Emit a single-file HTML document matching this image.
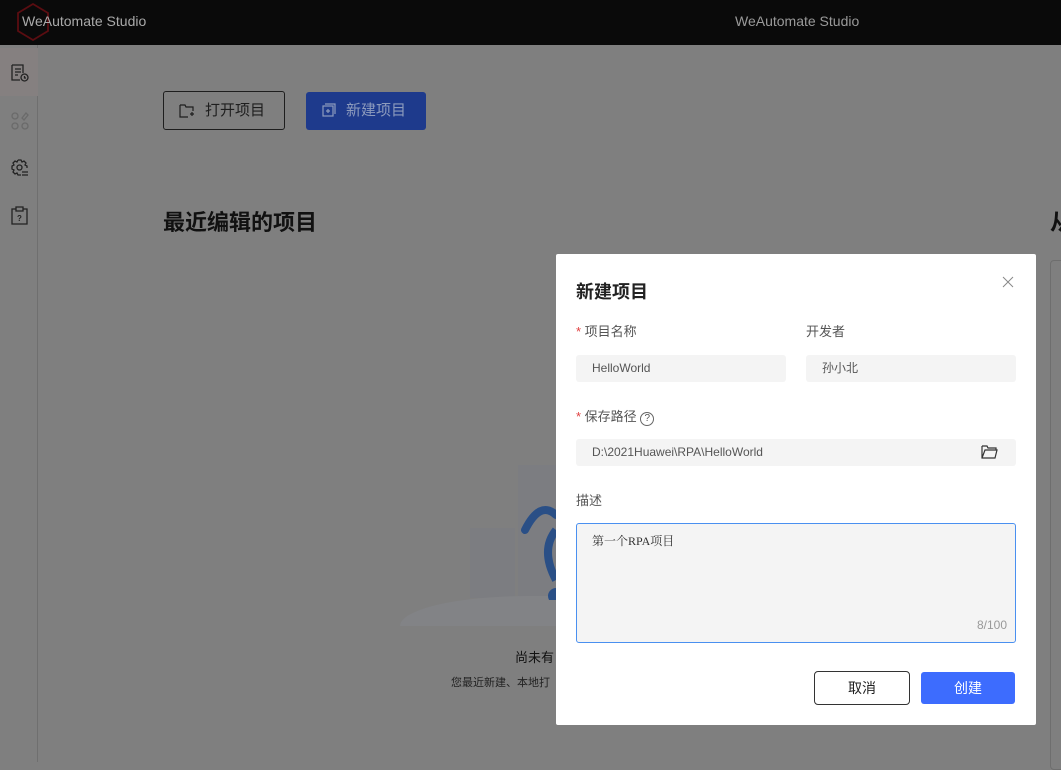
<!DOCTYPE html>
<html><head><meta charset="utf-8"><style>
*{box-sizing:border-box;margin:0;padding:0}
body{width:1061px;height:762px;overflow:hidden;background:#7f7f7f;font-family:"Liberation Sans","Noto Sans CJK SC",sans-serif;position:relative}
.abs{position:absolute}
.top{left:0;top:0;width:1061px;height:45px;background:#0a0a0a}
.side{left:0;top:45px;width:38px;height:717px;border-right:1px solid #6f6f6f}
.inp{background:#f4f4f4;border-radius:3px;height:27px;font-size:12px;color:#555;line-height:27px;padding-left:16px}
.lbl{font-size:13px;color:#555}
.star{color:#e04040}
</style></head><body>
<div class="abs top">
  <svg class="abs" style="left:16px;top:3px" width="34" height="38" viewBox="0 0 34 38"><polygon points="17,1 32,10 32,28 17,37 2,28 2,10" fill="none" stroke="#5a0d11" stroke-width="1.8"/></svg>
  <div class="abs" style="left:22px;top:13px;font-size:14px;color:#aaa">WeAutomate Studio</div>
  <div class="abs" style="left:735px;top:13px;font-size:14px;color:#9a9a9a">WeAutomate Studio</div>
</div>
<div class="abs side">
  <div class="abs" style="left:0;top:3px;width:38px;height:48px;background:#858080"></div>
  <svg class="abs" style="left:10px;top:18px" width="20" height="20" viewBox="0 0 20 20" fill="none" stroke="#222" stroke-width="1.3"><path d="M2 2h11v8M2 2v15h8M5 6h6M5 9h6M5 12h3"/><circle cx="14.5" cy="14.5" r="3.5"/><path d="M14.5 13v2h1.5"/></svg>
  <svg class="abs" style="left:10px;top:66px" width="20" height="20" viewBox="0 0 20 20" fill="none" stroke="#6a6a6a" stroke-width="1.3"><circle cx="5" cy="5" r="3"/><circle cx="5" cy="15" r="3"/><circle cx="15" cy="15" r="3"/><path d="M12 7l4-5 2 2-4 5z"/></svg>
  <svg class="abs" style="left:10px;top:113px" width="20" height="20" viewBox="0 0 20 20" fill="none" stroke="#222" stroke-width="1.3"><path d="M8 2h3l1 2 2-1 2 2-1 2 2 1v2M8 2L7 4 5 3 3 5l1 2-2 1v3l2 1-1 2 2 2 2-1 1 2h3"/><circle cx="9.5" cy="9.5" r="2.5"/><path d="M12 14h6M12 17h6"/></svg>
  <svg class="abs" style="left:10px;top:161px" width="20" height="20" viewBox="0 0 20 20" fill="none" stroke="#222" stroke-width="1.3"><path d="M6 3H2v15h15V3h-4M6 1h7v4H6z"/><text x="7" y="15" font-size="8" fill="#222" stroke="none" font-family="Liberation Sans" font-weight="bold">?</text></svg>
</div>
<div class="abs" style="left:163px;top:91px;width:122px;height:39px;border:1px solid #1e1e1e;border-radius:3px;font-size:15px;color:#1e1e1e;line-height:37px;padding-left:41px">打开项目
  <svg class="abs" style="left:15px;top:11px" width="16" height="16" viewBox="0 0 16 16" fill="none" stroke="#1e1e1e" stroke-width="1.2"><path d="M1 2h5l1 2h7v4M1 2v12h8M11 11h4M13 9v4"/></svg></div>
<div class="abs" style="left:306px;top:92px;width:120px;height:38px;background:#1e3a8c;border-radius:3px;font-size:15px;color:#8d9bbd;line-height:38px;padding-left:40px">新建项目
  <svg class="abs" style="left:16px;top:11px" width="14" height="14" viewBox="0 0 14 14" fill="none" stroke="#8d9bbd" stroke-width="1.2"><rect x="1" y="3" width="10" height="10"/><path d="M3 1h10v10M6 6v4M4 8h4"/></svg></div>
<div class="abs" style="left:163px;top:205px;font-size:22px;font-weight:bold;color:#111">最近编辑的项目</div>
<div class="abs" style="left:1050px;top:205px;font-size:22px;font-weight:bold;color:#111">从</div>
<div class="abs" style="left:1050px;top:260px;width:20px;height:510px;border:1px solid #6e6e6e;border-radius:4px"></div>
<!-- illustration -->
<div class="abs" style="left:470px;top:528px;width:45px;height:70px;background:#7c7d81"></div>
<div class="abs" style="left:518px;top:465px;width:40px;height:140px;background:#7c7d81"></div>
<div class="abs" style="left:400px;top:596px;width:160px;height:30px;border-radius:80% 0 0 0/100% 0 0 0;background:#828386"></div>
<svg class="abs" style="left:520px;top:490px" width="40" height="110" viewBox="0 0 40 110"><path d="M5 40Q20 10 36 25" stroke="#2a4f86" stroke-width="8" fill="none" stroke-linecap="round"/><path d="M36 40Q20 60 36 90" stroke="#2a4f86" stroke-width="8" fill="none"/><circle cx="36" cy="106" r="8" fill="#2a4f86"/></svg>
<div class="abs" style="left:515px;top:647px;font-size:13px;color:#111">尚未有</div>
<div class="abs" style="left:451px;top:674px;font-size:11px;color:#222">您最近新建、本地打</div>
<!-- dialog -->
<div class="abs" style="left:556px;top:254px;width:480px;height:471px;background:#fff;border-radius:2px">
  <div class="abs" style="left:20px;top:24px;font-size:18px;font-weight:bold;color:#222">新建项目</div>
  <svg class="abs" style="left:446px;top:22px" width="12" height="12" viewBox="0 0 12 12" stroke="#888" stroke-width="1"><path d="M1 1l10 10M11 1L1 11"/></svg>
  <div class="abs lbl" style="left:20px;top:67px"><span class="star">*</span> 项目名称</div>
  <div class="abs lbl" style="left:250px;top:67px">开发者</div>
  <div class="abs inp" style="left:20px;top:101px;width:210px">HelloWorld</div>
  <div class="abs inp" style="left:250px;top:101px;width:210px">孙小北</div>
  <div class="abs lbl" style="left:20px;top:152px"><span class="star">*</span> 保存路径 <span style="display:inline-block;width:14px;height:14px;border:1px solid #666;border-radius:50%;font-size:10px;text-align:center;line-height:12px;vertical-align:0px">?</span></div>
  <div class="abs inp" style="left:20px;top:185px;width:440px">D:\2021Huawei\RPA\HelloWorld
    <svg class="abs" style="left:405px;top:6px" width="17" height="14" viewBox="0 0 17 14" fill="none" stroke="#333" stroke-width="1.2"><path d="M1 1h5l1 2h8v2M1 1v12h13l2-8H4L1 13"/></svg></div>
  <div class="abs lbl" style="left:20px;top:236px">描述</div>
  <div class="abs" style="left:20px;top:269px;width:440px;height:120px;background:#f4f4f4;border:1px solid #4a90f0;border-radius:3px">
    <div class="abs" style="left:15px;top:8px;font-size:12px;color:#333;font-family:'Liberation Serif','Noto Serif CJK SC',serif">第一个RPA项目</div>
    <div class="abs" style="right:8px;top:94px;font-size:12px;color:#999">8/100</div>
  </div>
  <div class="abs" style="left:258px;top:417px;width:96px;height:34px;border:1px solid #333;border-radius:4px;text-align:center;line-height:32px;font-size:14px;color:#222">取消</div>
  <div class="abs" style="left:365px;top:418px;width:94px;height:32px;background:#3d6cfe;border-radius:3px;text-align:center;line-height:32px;font-size:14px;color:#fff">创建</div>
</div>
</body></html>
